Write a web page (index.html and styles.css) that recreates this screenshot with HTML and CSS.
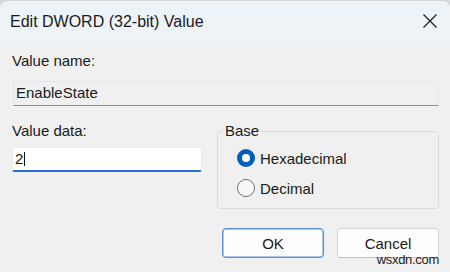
FILE: index.html
```html
<!DOCTYPE html>
<html lang="en">
<head>
  <meta charset="UTF-8">
  <meta name="viewport" content="width=device-width, initial-scale=1.0">
  <title>Edit DWORD (32-bit) Value</title>
  <link rel="stylesheet" href="styles.css">
</head>
<body>

  <div class="window">
    <!-- Title bar -->
    <div class="titlebar">
      <span class="title">Edit DWORD (32-bit) Value</span>
      <svg class="close" width="16" height="16" viewBox="0 0 16 16">
        <path d="M1.5 1.5 L14.5 14.5 M14.5 1.5 L1.5 14.5" stroke="#1b1b1b" stroke-width="1.2" fill="none"/>
      </svg>
    </div>

    <div class="content">
      <div class="label">Value name:</div>
      <div class="field readonly">EnableState</div>

      <div class="row">
        <div class="data-col">
          <div class="label">Value data:</div>
          <div class="field edit">2<span class="caret"></span></div>
        </div>

        <fieldset class="base">
          <legend>Base</legend>
          <div class="radio-row">
            <span class="radio checked"></span>
            <span>Hexadecimal</span>
          </div>
          <div class="radio-row">
            <span class="radio"></span>
            <span>Decimal</span>
          </div>
        </fieldset>
      </div>

      <div class="buttons">
        <button class="btn default">OK</button>
        <button class="btn">Cancel</button>
      </div>
    </div>

    <div class="watermark">wsxdn.com</div>
  </div>

</body>
</html>
```

FILE: styles.css
```css
body {
  margin: 0;
  background-color: #d6d6d6;
  font-family: 'Liberation Sans', Arial, sans-serif;
  color: #1a1a1a;
}

.window {
  position: relative;
  width: 450px;
  height: 271px;
  margin-top: 1px;
  background-color: #f0f0f0;
  border-radius: 8px 8px 0 0;
  overflow: hidden;
}

/* Title bar */
.titlebar {
  height: 40px;
  background-color: #eef3f8;
  display: flex;
  align-items: center;
  justify-content: space-between;
  padding: 0 12px 0 10px;
  box-sizing: border-box;
}

.title {
  font-size: 16px;
  margin-top: 1px;
}

.close {
  display: block;
}

/* Content */
.content {
  padding: 0 11px 0 12px;
}

.label {
  font-size: 15px;
  line-height: 18px;
  margin-top: 11px;
}

.field {
  box-sizing: border-box;
  height: 25px;
  font-size: 15px;
  padding-left: 2px;
}

.readonly {
  margin-top: 11px;
  margin-left: 1px;
  border: 1px solid #e6e6e6;
  border-bottom: 1px solid #8e8e8e;
  line-height: 20px;
  padding-top: 1px;
}

.row {
  display: flex;
  gap: 15px;
  margin-top: 16px;
}

.data-col {
  width: 190px;
}

.data-col .label {
  margin-top: 0;
}

.edit {
  margin-top: 7px;
  background-color: #fffffd;
  border: 1px solid #ececec;
  border-bottom: 2px solid #2c6fd2;
  border-radius: 2px;
  line-height: 21px;
}

.caret {
  display: inline-block;
  width: 1px;
  height: 14px;
  background-color: #111;
  margin-left: 1px;
  vertical-align: -2px;
}

/* Base group */
.base {
  flex: 1;
  margin: 0;
  padding: 3px 5px 5px 5px;
  border: 1px solid #dcdcdc;
  border-radius: 3px;
}

.base legend {
  font-size: 15px;
  line-height: 18px;
  padding: 0 2px;
}

.radio-row {
  display: flex;
  align-items: center;
  gap: 5px;
  height: 30px;
  padding-left: 14px;
  font-size: 15px;
}

.radio {
  box-sizing: border-box;
  width: 18px;
  height: 18px;
  border-radius: 50%;
  border: 1px solid #707070;
  background-color: #f8f8f8;
  display: flex;
  align-items: center;
  justify-content: center;
}

.radio.checked {
  border: none;
  background-color: #005fb8;
}

.radio.checked::after {
  content: '';
  width: 8px;
  height: 8px;
  border-radius: 50%;
  background-color: #fff;
}

/* Buttons */
.buttons {
  display: flex;
  justify-content: flex-end;
  gap: 13px;
  margin-top: 19px;
}

.btn {
  width: 102px;
  height: 30px;
  font-family: 'Liberation Sans', Arial, sans-serif;
  font-size: 15px;
  color: #1a1a1a;
  background-color: #fdfdfd;
  border: 1px solid #d3d3d3;
  border-bottom-color: #c2c2c2;
  border-radius: 4px;
  padding: 0;
}

.btn.default {
  border: 1px solid #5a8fd6;
  box-shadow: inset 0 0 0 0.5px #5a8fd6;
}

.watermark {
  position: absolute;
  right: 11px;
  bottom: 5px;
  font-size: 13px;
  letter-spacing: -0.3px;
  color: #222;
}
```
